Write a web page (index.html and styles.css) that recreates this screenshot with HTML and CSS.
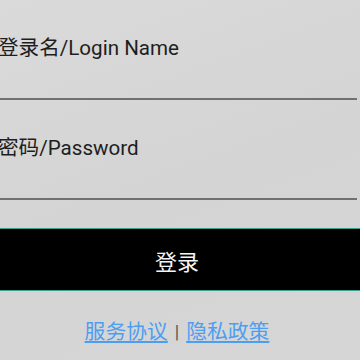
FILE: index.html
```html
<!DOCTYPE html>
<html>
<head>
<meta charset="utf-8">
<link rel="stylesheet" href="styles.css">
</head>
<body>
<div class="page">
  <div class="field"><span class="label">登录名/Login Name</span></div>
  <div class="field"><span class="label">密码/Password</span></div>
  <button class="login">登录</button>
  <div class="links">
    <a class="link" href="#">服务协议</a>
    <span class="sep">|</span>
    <a class="link" href="#">隐私政策</a>
  </div>
</div>
</body>
</html>
```
FILE: styles.css
```css
html, body {
  margin: 0;
  padding: 0;
  width: 360px;
  height: 360px;
  overflow: hidden;
}
body {
  background: linear-gradient(160deg, #dadada 0%, #d4d4d4 50%, #d6d6d6 100%);
  font-family: Roboto, "Noto Sans CJK SC", sans-serif;
}
.page {
  display: flex;
  flex-direction: column;
}
.field {
  height: 98px;
  margin-right: 3px;
  border-bottom: 2px solid #707070;
  display: flex;
  align-items: flex-start;
}
.label {
  margin-top: 36px;
  margin-left: -2px;
  font-size: 20.6px;
  line-height: 24px;
  color: #1e1e1e;
}
.login {
  margin-top: 28px;
  height: 63px;
  width: 100%;
  background: #000;
  border: none;
  border-top: 1px solid #3e9e8e;
  border-bottom: 1px solid #3e9e8e;
  color: #f4f4f4;
  font-family: Roboto, "Noto Sans CJK SC", sans-serif;
  font-size: 22px;
  padding: 0 6px 0 0;
  text-align: center;
}
.links {
  margin-top: 29px;
  display: flex;
  justify-content: center;
  align-items: center;
  gap: 7px;
  font-size: 20.8px;
  line-height: 24px;
  padding-right: 6px;
}
.link {
  color: #4d9ef0;
  text-decoration: underline;
  text-underline-offset: 2px;
}
.sep {
  color: #555;
  font-size: 18px;
}
```
